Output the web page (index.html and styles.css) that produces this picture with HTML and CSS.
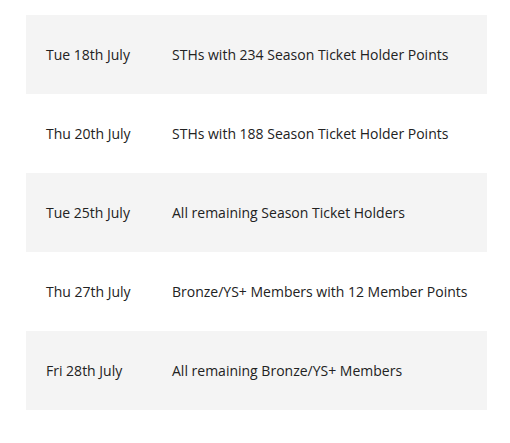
FILE: index.html
```html
<!DOCTYPE html>
<html>
<head>
<meta charset="utf-8">
<link rel="stylesheet" href="styles.css">
</head>
<body>
<div class="schedule">
  <div class="row shaded"><div class="cell">Tue 18th July</div><div class="cell">STHs with 234 Season Ticket Holder Points</div></div>
  <div class="row"><div class="cell">Thu 20th July</div><div class="cell">STHs with 188 Season Ticket Holder Points</div></div>
  <div class="row shaded"><div class="cell">Tue 25th July</div><div class="cell">All remaining Season Ticket Holders</div></div>
  <div class="row"><div class="cell">Thu 27th July</div><div class="cell">Bronze/YS+ Members with 12 Member Points</div></div>
  <div class="row shaded"><div class="cell">Fri 28th July</div><div class="cell">All remaining Bronze/YS+ Members</div></div>
</div>
</body>
</html>
```
FILE: styles.css
```css
html, body {
  margin: 0;
  padding: 0;
  background: #fff;
}
body {
  padding: 15px 0 0 26px;
  font-family: "Open Sans", "DejaVu Sans", sans-serif;
  font-size: 14px;
  color: #222;
}
.schedule {
  width: 461px;
}
.row {
  display: grid;
  grid-template-columns: 126px 1fr;
  align-items: center;
  height: 79px;
}
.row.shaded {
  background: #f4f4f4;
}
.cell {
  padding-left: 20px;
  white-space: nowrap;
}
```
